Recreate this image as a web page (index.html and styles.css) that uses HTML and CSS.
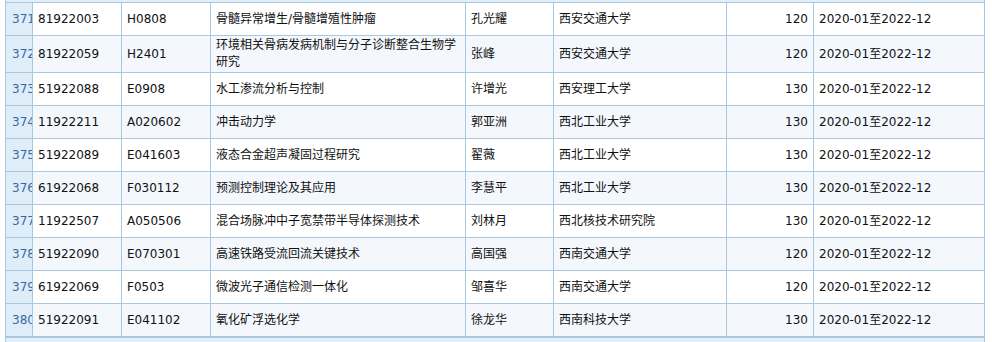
FILE: index.html
```html
<!DOCTYPE html>
<html lang="zh-CN">
<head>
<meta charset="utf-8">
<title>项目列表</title>
<link rel="stylesheet" href="styles.css">
</head>
<body>
<div class="wrap">
  <div class="head-strip"></div>
  <table class="grid">
    <colgroup>
      <col class="c-idx"><col class="c-no"><col class="c-code"><col class="c-title"><col class="c-person"><col class="c-org"><col class="c-money"><col class="c-date">
    </colgroup>
    <tbody>
      <tr><td class="idx">371</td><td>81922003</td><td>H0808</td><td>骨髓异常增生/骨髓增殖性肿瘤</td><td>孔光耀</td><td>西安交通大学</td><td class="num">120</td><td>2020-01至2022-12</td></tr>
      <tr class="alt"><td class="idx">372</td><td>81922059</td><td>H2401</td><td class="wrap-cell">环境相关骨病发病机制与分子诊断整合生物学研究</td><td>张峰</td><td>西安交通大学</td><td class="num">120</td><td>2020-01至2022-12</td></tr>
      <tr><td class="idx">373</td><td>51922088</td><td>E0908</td><td>水工渗流分析与控制</td><td>许增光</td><td>西安理工大学</td><td class="num">130</td><td>2020-01至2022-12</td></tr>
      <tr class="alt"><td class="idx">374</td><td>11922211</td><td>A020602</td><td>冲击动力学</td><td>郭亚洲</td><td>西北工业大学</td><td class="num">130</td><td>2020-01至2022-12</td></tr>
      <tr><td class="idx">375</td><td>51922089</td><td>E041603</td><td>液态合金超声凝固过程研究</td><td>翟薇</td><td>西北工业大学</td><td class="num">130</td><td>2020-01至2022-12</td></tr>
      <tr class="alt"><td class="idx">376</td><td>61922068</td><td>F030112</td><td>预测控制理论及其应用</td><td>李慧平</td><td>西北工业大学</td><td class="num">130</td><td>2020-01至2022-12</td></tr>
      <tr><td class="idx">377</td><td>11922507</td><td>A050506</td><td>混合场脉冲中子宽禁带半导体探测技术</td><td>刘林月</td><td>西北核技术研究院</td><td class="num">130</td><td>2020-01至2022-12</td></tr>
      <tr class="alt"><td class="idx">378</td><td>51922090</td><td>E070301</td><td>高速铁路受流回流关键技术</td><td>高国强</td><td>西南交通大学</td><td class="num">120</td><td>2020-01至2022-12</td></tr>
      <tr><td class="idx">379</td><td>61922069</td><td>F0503</td><td>微波光子通信检测一体化</td><td>邹喜华</td><td>西南交通大学</td><td class="num">120</td><td>2020-01至2022-12</td></tr>
      <tr class="alt"><td class="idx">380</td><td>51922091</td><td>E041102</td><td>氧化矿浮选化学</td><td>徐龙华</td><td>西南科技大学</td><td class="num">130</td><td>2020-01至2022-12</td></tr>
    </tbody>
  </table>
  <div class="foot-strip"></div>
</div>
</body>
</html>
```
FILE: styles.css
```css
html, body {
  margin: 0;
  padding: 0;
  background: #ffffff;
}

.wrap {
  width: 980px;
  margin-left: 5px;
}

.head-strip {
  height: 2px;
  background: #e2eff9;
  border-left: 1px solid #a9c8e0;
  border-right: 1px solid #a9c8e0;
  box-sizing: border-box;
}

.grid {
  width: 980px;
  table-layout: fixed;
  border-collapse: separate;
  border-spacing: 0;
  border-left: 1px solid #a9c8e0;
  border-top: 1px solid #a9c8e0;
  font-family: "DejaVu Sans", "Noto Sans CJK SC", sans-serif;
  font-size: 12px;
  color: #111111;
}

.c-idx { width: 27px; }
.c-no { width: 89px; }
.c-code { width: 89px; }
.c-title { width: 255px; }
.c-person { width: 88px; }
.c-org { width: 173px; }
.c-money { width: 87px; }
.c-date { width: 171px; }

.grid td {
  box-sizing: border-box;
  height: 33px;
  padding: 1px 5px;
  line-height: 17px;
  border-right: 1px solid #a9c8e0;
  border-bottom: 1px solid #a9c8e0;
  vertical-align: middle;
  white-space: nowrap;
  overflow: hidden;
  background: #ffffff;
}

.grid tr.alt td {
  background: #f4f8fd;
}

.grid td.idx,
.grid tr.alt td.idx {
  background: #deedf7;
  color: #3a68a6;
  padding-left: 6px;
  padding-right: 0;
  text-overflow: clip;
}

.grid td.wrap-cell {
  white-space: normal;
}

.grid td.num {
  text-align: right;
}

.foot-strip {
  height: 6px;
  background: #e2eff9;
  border-top: 1px solid #a9c8e0;
  border-left: 1px solid #a9c8e0;
  border-right: 1px solid #a9c8e0;
  box-sizing: border-box;
}
```
